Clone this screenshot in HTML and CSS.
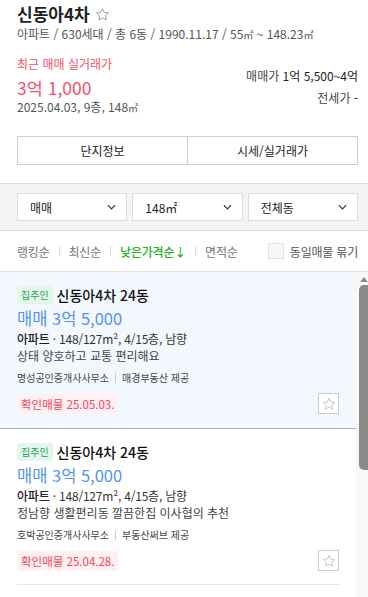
FILE: index.html
```html
<!DOCTYPE html>
<html lang="ko">
<head>
<meta charset="utf-8">
<link rel="stylesheet" href="styles.css">
</head>
<body>
<div class="page">
  <header class="head">
    <h1 class="title"><span>신동아4차</span><svg class="star-ic" viewBox="0 0 24 24"><polygon points="12,2.5 14.9,8.7 21.6,9.4 16.6,14 18,20.7 12,17.3 6,20.7 7.4,14 2.4,9.4 9.1,8.7"/></svg></h1>
    <p class="meta">아파트 / 630세대 / 총 6동 / 1990.11.17 / 55<span class="unit">㎡</span> ~ 148.23<span class="unit">㎡</span></p>
    <div class="prices">
      <div class="recent">
        <div class="recent-label">최근 매매 실거래가</div>
        <div class="recent-price">3억 1,000</div>
        <div class="recent-info">2025.04.03, 9층, 148<span class="unit">㎡</span></div>
      </div>
      <div class="range">
        <div class="range-row"><span class="range-k">매매가</span> 1억 5,500~4억</div>
        <div class="range-row"><span class="range-k">전세가</span> -</div>
      </div>
    </div>
    <div class="tabs">
      <button class="tab">단지정보</button>
      <button class="tab">시세/실거래가</button>
    </div>
  </header>

  <div class="filters">
    <div class="sel"><span>매매</span><svg class="chev" viewBox="0 0 10 6"><polyline points="1,1 5,5 9,1"/></svg></div>
    <div class="sel"><span>148㎡</span><svg class="chev" viewBox="0 0 10 6"><polyline points="1,1 5,5 9,1"/></svg></div>
    <div class="sel"><span>전체동</span><svg class="chev" viewBox="0 0 10 6"><polyline points="1,1 5,5 9,1"/></svg></div>
  </div>

  <div class="sorts">
    <span class="sort">랭킹순</span><span class="bar"></span>
    <span class="sort">최신순</span><span class="bar"></span>
    <span class="sort on">낮은가격순↓</span><span class="bar"></span>
    <span class="sort">면적순</span>
    <label class="same"><span class="chk"></span>동일매물 묶기</label>
  </div>

  <div class="list">
    <div class="list-body">
      <div class="item active">
        <div class="item-head"><span class="owner">집주인</span><span class="item-name">신동아4차 24동</span></div>
        <div class="item-price">매매 3억 5,000</div>
        <div class="item-spec"><b>아파트</b> · 148/127m², 4/15층, 남향</div>
        <div class="item-desc">상태 양호하고 교통 편리해요</div>
        <div class="item-agent">명성공인중개사사무소<span class="vbar"></span>매경부동산 제공</div>
        <div class="item-foot">
          <span class="confirm">확인매물 25.05.03.</span>
          <button class="fav"><svg viewBox="0 0 24 24"><polygon points="12,2.5 14.9,8.7 21.6,9.4 16.6,14 18,20.7 12,17.3 6,20.7 7.4,14 2.4,9.4 9.1,8.7"/></svg></button>
        </div>
      </div>
      <div class="item">
        <div class="item-head"><span class="owner">집주인</span><span class="item-name">신동아4차 24동</span></div>
        <div class="item-price">매매 3억 5,000</div>
        <div class="item-spec"><b>아파트</b> · 148/127m², 4/15층, 남향</div>
        <div class="item-desc">정남향 생활편리동 깔끔한집 이사협의 추천</div>
        <div class="item-agent">호박공인중개사사무소<span class="vbar"></span>부동산써브 제공</div>
        <div class="item-foot">
          <span class="confirm">확인매물 25.04.28.</span>
          <button class="fav"><svg viewBox="0 0 24 24"><polygon points="12,2.5 14.9,8.7 21.6,9.4 16.6,14 18,20.7 12,17.3 6,20.7 7.4,14 2.4,9.4 9.1,8.7"/></svg></button>
        </div>
      </div>
    </div>
    <div class="scroll">
      <div class="scroll-up"></div>
      <div class="scroll-thumb"></div>
    </div>
  </div>
</div>
</body>
</html>
```

FILE: styles.css
```css
* { box-sizing: border-box; }
html, body { margin: 0; padding: 0; }
body {
  width: 368px;
  height: 597px;
  overflow: hidden;
  background: #fff;
  font-family: "Noto Sans CJK KR", "Noto Sans", sans-serif;
  color: #222;
}
.page { display: flex; flex-direction: column; height: 597px; }

.head { padding: 2px 10px 0 17px; }
.title {
  margin: 0;
  font-size: 17px;
  line-height: 24px;
  font-weight: 700;
  color: #222;
  display: flex;
  align-items: center;
  gap: 5px;
}
.star-ic { width: 15px; height: 15px; fill: none; stroke: #9a9a9a; stroke-width: 1.5; stroke-linejoin: round; }
.meta { margin: 0; font-size: 12px; line-height: 16px; color: #555; }
.unit { font-size: 10px; }

.prices { display: flex; justify-content: space-between; align-items: flex-start; margin-top: 12px; }
.recent-label { font-size: 12px; line-height: 17px; color: #f4506a; }
.recent-price { font-size: 17.5px; line-height: 22px; color: #f4506a; margin-top: 5px; }
.recent-info { font-size: 12px; line-height: 16px; color: #555; }
.range { text-align: right; font-size: 12px; color: #222; padding-top: 10px; }
.range-row { line-height: 22px; }
.range-k { color: #444; }

.tabs { display: flex; margin-top: 20px; border: 1px solid #cfcfcf; }
.tab {
  flex: 1;
  height: 27px;
  border: 0;
  background: #fff;
  font: inherit;
  font-size: 12px;
  color: #222;
}
.tab + .tab { border-left: 1px solid #cfcfcf; }

.filters {
  margin-top: 18px;
  background: #f4f4f4;
  border-top: 1px solid #ddd;
  border-bottom: 1px solid #ddd;
  padding: 9px 10px 9px 17px;
  display: flex;
  gap: 5px;
}
.sel {
  flex: 1;
  height: 28px;
  background: #fff;
  border: 1px solid #ddd;
  display: flex;
  align-items: center;
  justify-content: space-between;
  padding: 0 10px 0 12px;
  font-size: 12px;
  color: #222;
}
.chev { width: 9px; height: 6px; fill: none; stroke: #333; stroke-width: 1.3; }

.sorts {
  display: flex;
  align-items: center;
  height: 40px;
  padding: 0 10px 0 17px;
  font-size: 12px;
  color: #777;
  letter-spacing: -0.2px;
}
.sort.on { color: #1cb51c; font-weight: 500; }
.bar { width: 1px; height: 10px; background: #ddd; margin: 0 9px; }
.same { margin-left: auto; display: flex; align-items: center; gap: 6px; color: #555; }
.chk { width: 16px; height: 16px; border: 1px solid #e2e2e2; background: #f7f7f7; }

.list {
  flex: 1;
  min-height: 0;
  display: flex;
  border-top: 1px solid #e4e4e4;
}
.list-body { flex: 1; overflow: hidden; }
.item { padding: 13px 0 14px 17px; position: relative; }
.item.active { background: #f3f8ff; border-bottom: 1px solid #8fb6e8; }
.item:not(.active)::after {
  content: "";
  position: absolute;
  left: 17px; right: 15px; bottom: 0;
  height: 1px;
  background: #e8e8e8;
}
.item-head { display: flex; align-items: center; gap: 4px; height: 19px; }
.owner {
  background: #e3f6ea;
  color: #2aa35e;
  font-size: 10px;
  line-height: 18px;
  padding: 0 4px;
  border-radius: 3px;
}
.item-name { font-size: 14px; font-weight: 500; color: #111; }
.item-price { font-size: 16.5px; line-height: 24px; color: #5693ec; margin-top: 2px; }
.item-spec { font-size: 12px; line-height: 17px; color: #333; letter-spacing: -0.2px; }
.item-spec b { font-weight: 500; color: #222; }
.item-desc { font-size: 12px; line-height: 17px; color: #444; }
.item-agent { font-size: 10px; line-height: 16px; color: #444; margin-top: 6px; display: flex; align-items: center; }
.vbar { width: 1px; height: 10px; background: #ccc; margin: 0 6px; }
.item-foot { display: flex; justify-content: space-between; align-items: center; margin-top: 7px; padding-right: 17px; }
.confirm {
  background: #fff0f1;
  color: #f0455a;
  font-size: 11.5px;
  line-height: 20px;
  padding: 0 4px;
  border-radius: 3px;
}
.fav {
  width: 21px; height: 21px;
  border: 1px solid #ccc;
  background: #fff;
  padding: 0;
  display: flex; align-items: center; justify-content: center;
}
.fav svg { width: 14px; height: 14px; fill: none; stroke: #bbb; stroke-width: 1.4; stroke-linejoin: round; }

.scroll {
  width: 12px;
  background: #f8f8f8;
  padding: 5px 0 0 3px;
  display: flex;
  flex-direction: column;
}
.scroll-up {
  width: 0; height: 0;
  margin-left: 0.5px;
  border-left: 4.5px solid transparent;
  border-right: 4.5px solid transparent;
  border-bottom: 5px solid #8a8a8a;
}
.scroll-thumb {
  margin-top: 3px;
  height: 185px;
  background: #8a8a8a;
  border-radius: 5px 0 0 5px;
}
```
